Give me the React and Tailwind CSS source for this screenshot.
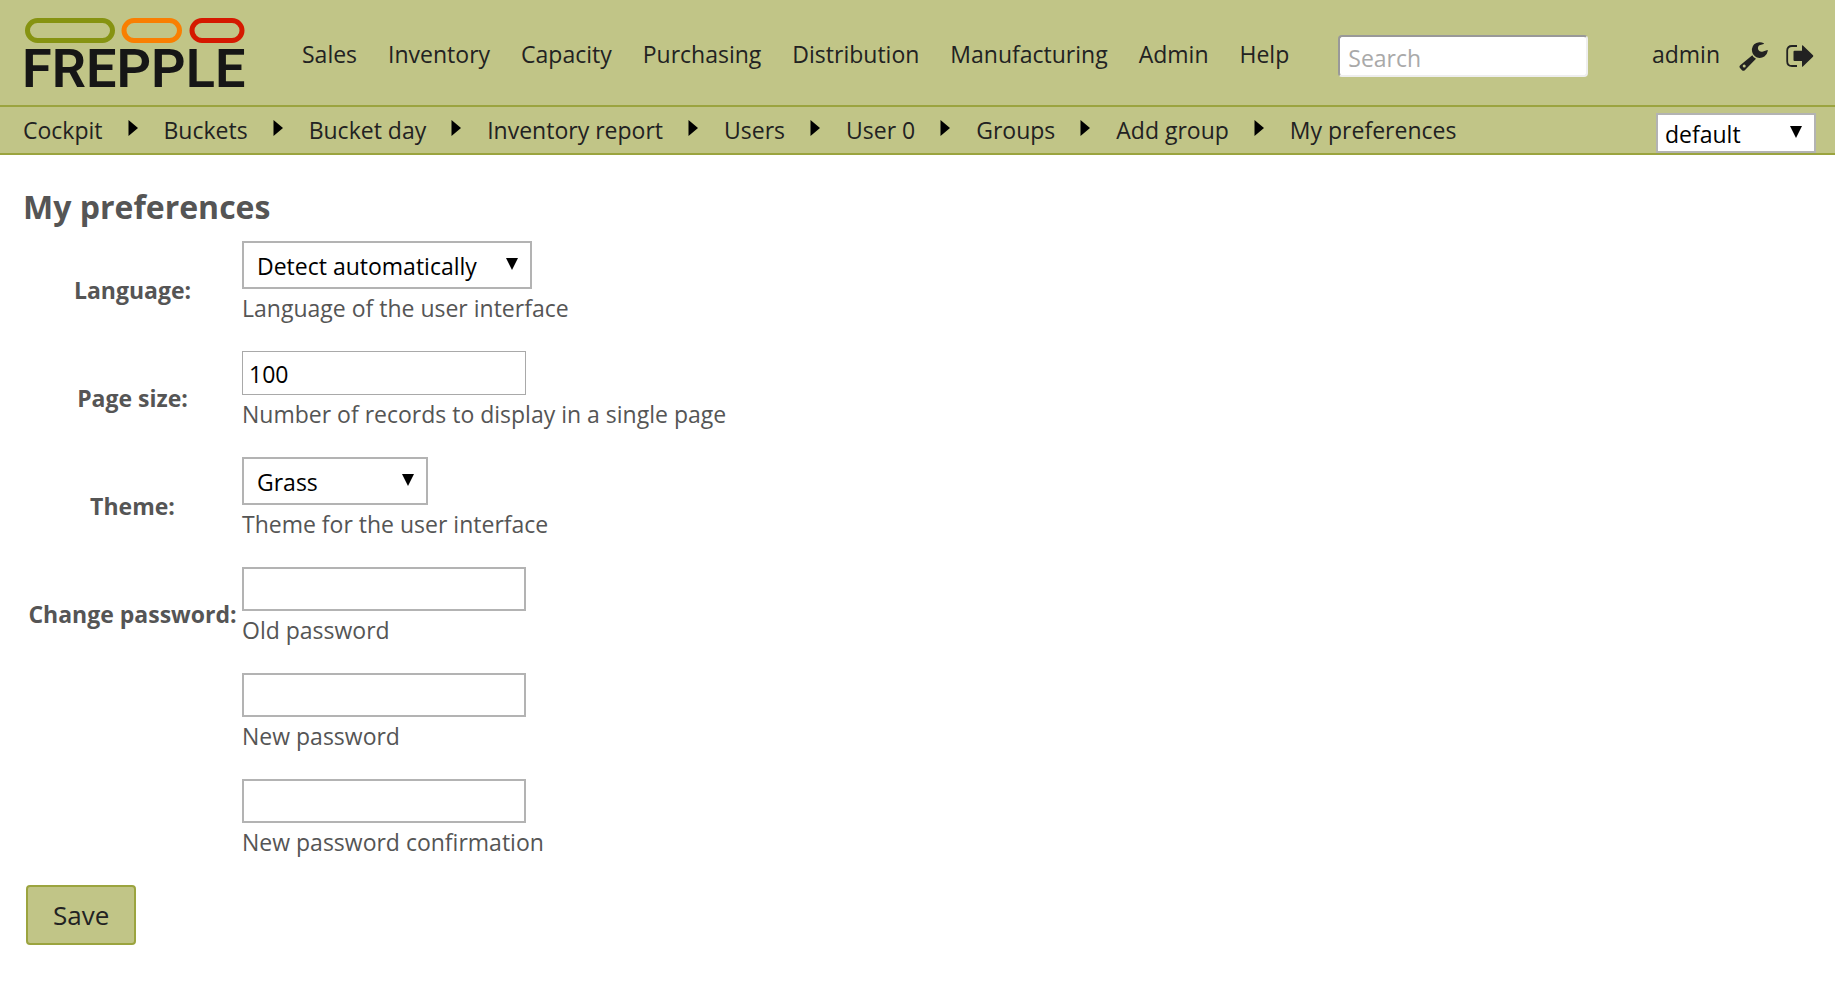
const menu = ['Sales', 'Inventory', 'Capacity', 'Purchasing', 'Distribution', 'Manufacturing', 'Admin', 'Help'];

const crumbs = ['Cockpit', 'Buckets', 'Bucket day', 'Inventory report', 'Users', 'User 0', 'Groups', 'Add group', 'My preferences'];

function Logo() {
  return (
    <svg viewBox="0 0 222 74" className="h-[74px] w-[222px] overflow-visible" role="img" aria-label="frePPLe">
      <g fill="none" strokeWidth="5">
        <rect x="3.5" y="4.500" width="85" height="20" rx="10" stroke="#869311" />
        <rect x="100" y="4.500" width="55.500" height="20" rx="10" stroke="#f97f02" />
        <rect x="168" y="4.500" width="50" height="20" rx="10" stroke="#d51900" />
      </g>
      <text x="-2" y="71" fill="#161616" fontFamily="Roboto, sans-serif" fontWeight="600" fontSize="54">FREPPLE</text>
    </svg>
  );
}

function Crumb({ label, first }) {
  return (
    <li className="flex items-center">
      {!first && (
        <svg viewBox="0 0 10 16" className="ml-[25px] mr-[26px] -mt-1 h-4 w-2.5" aria-hidden="true">
          <path d="M0.500 0v16L10 8z" fill="#000" />
        </svg>
      )}
      <a href="#">{label}</a>
    </li>
  );
}

function Select({ className, ...props }) {
  return (
    <span className="relative inline-flex">
      <select className={`appearance-none border-2 border-[#b3b3b3] bg-white text-black ${className}`} {...props} />
      <svg viewBox="0 0 12 12" className="pointer-events-none absolute inset-y-0 right-3.5 my-auto size-3 -translate-y-px" aria-hidden="true">
        <path d="M0 0h12L6 12z" fill="#000" />
      </svg>
    </span>
  );
}

function Row({ label, id, help, children }) {
  return (
    <>
      <div className="flex items-center justify-center whitespace-nowrap pb-0.5 font-bold">{label && <label htmlFor={id}>{label}</label>}</div>
      <div className="pt-[5px] pb-[22px]">
        <div className="flex">{children}</div>
        <p id={`${id}-help`} className="mt-[3px] leading-8">{help}</p>
      </div>
    </>
  );
}

const passwordBox = 'h-11 w-[284px] border-2 border-[#b3b3b3] bg-white px-1.5 text-black';

export default function App() {
  return (
    <div className="font-['Open_Sans',sans-serif] text-[23px] leading-8 text-[#555]">
      <header className="bg-[#c1c587] text-[#222]">
        <div className="flex h-[107px] border-b-2 border-[#9ba43f] pl-6 pr-5">
          <a href="#" className="mt-4 shrink-0"><Logo /></a>
          <nav className="ml-14 mt-[38px]" aria-label="Main">
            <ul className="flex gap-[31px] leading-8">
              {menu.map((m) => <li key={m}><a href="#">{m}</a></li>)}
            </ul>
          </nav>
          <input
            type="search"
            aria-label="Search"
            placeholder="Search"
            className="ml-[49px] mt-[35px] h-[42px] w-[250px] rounded-sm border-2 border-b-[#eee] border-l-[#999] border-r-[#eee] border-t-[#999] bg-white px-2 pt-1 placeholder:text-[#a9a9a9]"
          />
          <div className="ml-auto mt-[38px] flex h-8 items-center">
            <a href="#" className="leading-8">admin</a>
            <a href="#" aria-label="Preferences" className="ml-[19px] mt-[5px]">
              <svg viewBox="0 0 29 29" className="size-[29px]" aria-hidden="true">
                <path fillRule="evenodd" fill="#222" d="M13.300 13.200 1.200 23.300Q-.2 24.800 1 26l2 2.200q1.400 1.200 2.800 0L17 16.800Q14.200 15.600 13.300 13.200zM5.200 22.600a1.500 1.500 0 1 1 0 3 1.500 1.500 0 0 1 0-3zM24.800 1.200Q22.600 0 20.200.2 13.800.8 12.900 7q-.2 5.600 4.500 8.200 4.300 1.700 8-.8 3-2.200 3.400-5.600 0-1-1-.6L24 9.500q-2 .7-3.700-.5-1.700-1.300-1.300-3.500.3-1.600 1.500-2.200L24.700 2q.5-.4.1-.8z" />
              </svg>
            </a>
            <a href="#" aria-label="Log out" className="ml-[18px] mr-px mt-[3px]">
              <svg viewBox="0 0 28 24" className="h-6 w-7" aria-hidden="true">
                <path d="M11 2H6Q1.200 2 1.200 6.500v10.700Q1.200 22 6 22h5" fill="none" stroke="#222" strokeWidth="1.800" />
                <path d="M7.500 7.800q0-1 1-1H16V1.800q0-1 .9-.3L27 11.300q.6.700 0 1.400L16.900 22.500q-.9.700-.9-.3V17H8.500q-1 0-1-1z" fill="#222" />
              </svg>
            </a>
          </div>
        </div>
        <div className="flex h-12 justify-between border-b-2 border-[#9ba43f] pl-[23px] pr-[19px]">
          <nav aria-label="Breadcrumb" className="mt-[7px]">
            <ol className="flex leading-8">
              {crumbs.map((c, i) => <Crumb key={c} label={c} first={i === 0} />)}
            </ol>
          </nav>
          <div className="mt-1.5 flex">
            <Select aria-label="Scenario" className="h-10 w-40 px-[7px] pt-0.5" defaultValue="default">
              <option>default</option>
            </Select>
          </div>
        </div>
      </header>
      <main className="px-[23px] pt-[30px]">
        <h1 className="text-[32px] font-bold leading-[44px]">My preferences</h1>
        <form className="mt-[7px]" onSubmit={(e) => e.preventDefault()}>
          <div className="grid grid-cols-[219px_1fr]">
            <Row label="Language:" id="language" help="Language of the user interface">
              <Select id="language" className="h-12 w-[290px] px-[13px] pt-0.5" defaultValue="Detect automatically">
                <option>Detect automatically</option>
              </Select>
            </Row>
            <Row label="Page size:" id="pagesize" help="Number of records to display in a single page">
              <input id="pagesize" type="text" defaultValue="100" className="h-11 w-[284px] border border-[#a9a9a9] bg-white px-1.5 pt-0.5 text-black" />
            </Row>
            <Row label="Theme:" id="theme" help="Theme for the user interface">
              <Select id="theme" className="h-12 w-[186px] px-[13px] pt-0.5" defaultValue="Grass">
                <option>Grass</option>
              </Select>
            </Row>
            <Row label="Change password:" id="old-password" help="Old password">
              <input id="old-password" type="password" className={passwordBox} />
            </Row>
            <Row id="new-password" help="New password">
              <input id="new-password" type="password" aria-labelledby="new-password-help" className={passwordBox} />
            </Row>
            <Row id="confirm-password" help="New password confirmation">
              <input id="confirm-password" type="password" aria-labelledby="confirm-password-help" className={passwordBox} />
            </Row>
          </div>
          <button type="submit" className="ml-[3px] mt-[5px] h-[60px] rounded-sm border-2 border-[#9ba43f] bg-[#c1c587] px-[25px] text-[26px] text-[#222]">
            Save
          </button>
        </form>
      </main>
    </div>
  );
}
